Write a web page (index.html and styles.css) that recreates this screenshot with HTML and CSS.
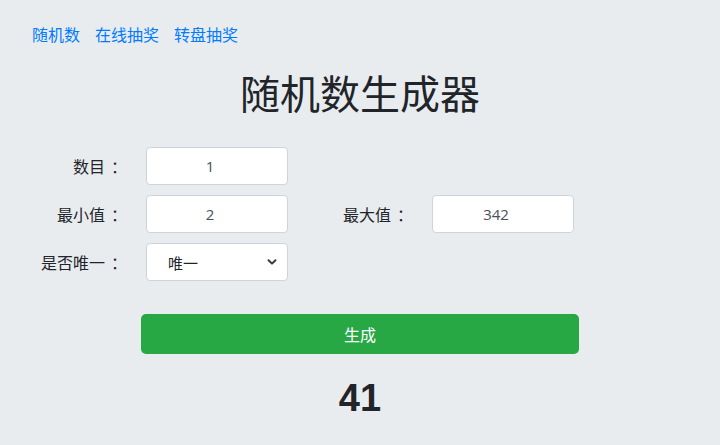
FILE: index.html
```html
<!DOCTYPE html>
<html lang="zh">
<head>
<meta charset="utf-8">
<title>随机数生成器</title>
<link rel="stylesheet" href="styles.css">
</head>
<body>
<nav class="nav">
  <a href="#">随机数</a>
  <a href="#">在线抽奖</a>
  <a href="#">转盘抽奖</a>
</nav>
<h1 class="title">随机数生成器</h1>
<form class="form">
  <label class="label">数目<span class="colon">：</span></label>
  <input class="field" type="text" value="1">
  <span></span><span></span>
  <label class="label">最小值<span class="colon">：</span></label>
  <input class="field" type="text" value="2">
  <label class="label">最大值<span class="colon">：</span></label>
  <input class="field" type="text" value="342">
  <label class="label">是否唯一<span class="colon">：</span></label>
  <div class="select-wrap">
    <select class="select">
      <option>唯一</option>
      <option>不唯一</option>
    </select>
    <svg class="chev" width="10" height="8" viewBox="0 0 10 8"><path d="M1.5 2.2 L5 5.6 L8.5 2.2" fill="none" stroke="#343a40" stroke-width="2" stroke-linecap="round" stroke-linejoin="round"/></svg>
  </div>
</form>
<div class="actions">
  <button class="btn" type="button">生成</button>
</div>
<div class="result">41</div>
</body>
</html>
```

FILE: styles.css
```css
html, body {
  margin: 0;
  padding: 0;
}
body {
  background: #e9ecef;
  color: #212529;
  font-family: "Open Sans", "Noto Sans CJK SC", sans-serif;
  font-size: 16px;
}
.nav {
  display: flex;
  gap: 15px;
  padding: 24px 0 0 32px;
  line-height: 20px;
}
.nav a {
  color: #007bff;
  text-decoration: none;
  font-family: "Noto Sans CJK SC", sans-serif;
}
.title {
  margin: 24px 0 0;
  text-align: center;
  font-family: "Noto Sans CJK SC", sans-serif;
  font-weight: 400;
  font-size: 40px;
  line-height: 48px;
}
.form {
  display: grid;
  grid-template-columns: 96px 142px 94px 142px;
  grid-auto-rows: 38px;
  column-gap: 25px;
  row-gap: 10px;
  padding-left: 25px;
  margin-top: 31px;
}
.label {
  text-align: right;
  line-height: 38px;
  font-family: "Noto Sans CJK SC", sans-serif;
  white-space: nowrap;
}
.colon {
  display: inline-block;
  padding-left: 6px;
  margin-right: -6px;
}
.field, .select {
  box-sizing: border-box;
  width: 142px;
  height: 38px;
  border: 1px solid #ced4da;
  border-radius: 4px;
  background: #fff;
  color: #495057;
  font-family: "Open Sans", "Noto Sans CJK SC", sans-serif;
  font-size: 15px;
  outline: none;
}
.field {
  text-align: center;
  padding: 0 26px 0 12px;
}
.select-wrap {
  position: relative;
  width: 142px;
  height: 38px;
}
.select {
  appearance: none;
  -webkit-appearance: none;
  padding: 0 30px 0 21px;
  font-family: "Noto Sans CJK SC", sans-serif;
  color: #212529;
}
.chev {
  position: absolute;
  right: 11px;
  top: 15px;
  pointer-events: none;
}
.actions {
  display: flex;
  justify-content: center;
  margin-top: 33px;
}
.btn {
  width: 438px;
  height: 40px;
  border: none;
  border-radius: 5px;
  background: #28a745;
  color: #fff;
  font-family: "Noto Sans CJK SC", sans-serif;
  font-size: 16px;
  cursor: pointer;
}
.result {
  margin-top: 21px;
  text-align: center;
  font-family: "Liberation Sans", sans-serif;
  font-weight: 700;
  font-size: 38px;
  line-height: 46px;
}
```
